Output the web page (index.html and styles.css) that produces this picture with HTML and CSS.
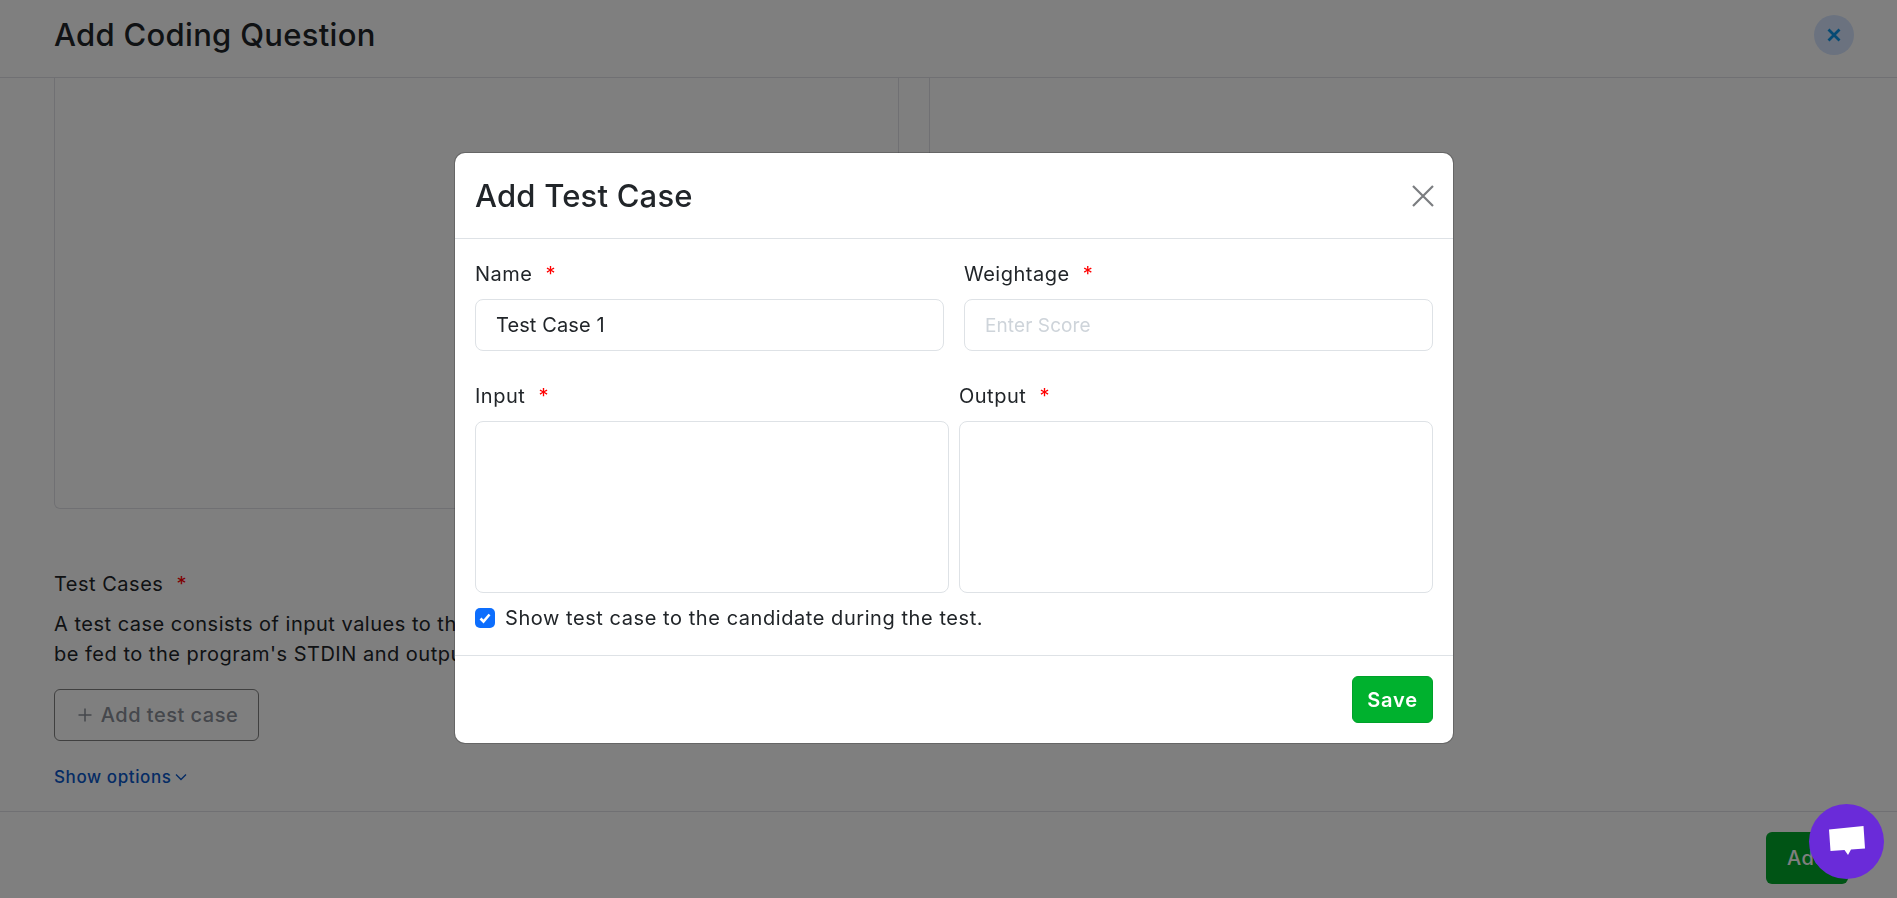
FILE: index.html
```html
<!DOCTYPE html>
<html lang="en">
<head>
<meta charset="utf-8">
<title>Add Coding Question</title>
<link rel="stylesheet" href="styles.css">
</head>
<body>
<div class="page">
  <header class="page-header">
    <h1 class="page-title">Add Coding Question</h1>
    <button class="round-close" type="button" aria-label="Close">
      <svg viewBox="0 0 16 16" width="16" height="16"><path d="M2.500 2.500l11 11M13.500 2.500l-11 11" fill="none" stroke="#0a94e8" stroke-width="2.800"/></svg>
    </button>
  </header>
  <main class="page-body">
    <div class="panes">
      <div class="pane-left"></div>
      <div class="pane-right"></div>
    </div>
    <div class="section">
      <div class="section-label">Test Cases <span class="req">*</span></div>
      <p class="section-text">A test case consists of input values to the<br>be fed to the program's STDIN and output</p>
      <button class="add-case" type="button">
        <svg viewBox="0 0 16 16" width="16" height="16"><path d="M8 1.500v13M1.500 8h13" fill="none" stroke="#8a8f98" stroke-width="1.500"/></svg>
        Add test case
      </button>
      <a class="show-options" href="#">Show options
        <svg viewBox="0 0 12 8" width="12" height="8"><path d="M1 1.500l5 5 5-5" fill="none" stroke="#0a58ca" stroke-width="1.400"/></svg>
      </a>
    </div>
  </main>
  <footer class="page-footer">
    <button class="add-btn" type="button">Add</button>
  </footer>
</div>

<div class="overlay">
  <div class="modal">
    <div class="modal-head">
      <h2 class="modal-title">Add Test Case</h2>
      <button class="modal-close" type="button" aria-label="Close">
        <svg viewBox="0 0 22 22" width="22" height="22"><path d="M1 1l20 20M21 1L1 21" fill="none" stroke="#7b7d80" stroke-width="2.200"/></svg>
      </button>
    </div>
    <div class="modal-body">
      <div class="row-top">
        <div class="field">
          <label class="field-label">Name <span class="req">*</span></label>
          <input class="text-input" type="text" value="Test Case 1">
        </div>
        <div class="field">
          <label class="field-label">Weightage <span class="req">*</span></label>
          <input class="text-input" type="text" placeholder="Enter Score">
        </div>
      </div>
      <div class="row-areas">
        <div class="field">
          <label class="field-label">Input <span class="req">*</span></label>
          <textarea class="area"></textarea>
        </div>
        <div class="field">
          <label class="field-label">Output <span class="req">*</span></label>
          <textarea class="area"></textarea>
        </div>
      </div>
      <label class="check-row">
        <span class="check">
          <svg viewBox="0 0 20 20" width="20" height="20"><path d="M5.500 10.500l3 3 6-7" fill="none" stroke="#fff" stroke-width="2.600"/></svg>
        </span>
        Show test case to the candidate during the test.
      </label>
    </div>
    <div class="modal-foot">
      <button class="save-btn" type="button">Save</button>
    </div>
  </div>
</div>

<button class="chat" type="button" aria-label="Chat">
  <svg viewBox="0 0 36 32" width="36" height="32"><path d="M0 3.500L34.500 0L36 22.500L22 23.500L19 29L15.500 24L1.500 25Z" fill="#fff"/></svg>
</button>
</body>
</html>
```
FILE: styles.css
```css
* { box-sizing: border-box; }
html, body { margin: 0; height: 100%; overflow: hidden; }
body {
  font-family: Inter, "Liberation Sans", sans-serif;
  color: #212529;
  background: #fff;
  font-size: 20px;
  letter-spacing: 0.5px;
}
button { font-family: inherit; letter-spacing: inherit; }

.page { height: 898px; display: flex; flex-direction: column; }

.page-header {
  height: 78px;
  flex: none;
  display: flex;
  align-items: center;
  justify-content: space-between;
  padding: 0 43px 8px 54px;
  border-bottom: 1px solid #e1e1e6;
}
.page-title { margin: 0; font-size: 31px; font-weight: 500; letter-spacing: 0.3px; color: #212529; }
.round-close {
  width: 40px; height: 40px; padding: 0; border: 0; border-radius: 50%;
  background: #d6e5ff; display: flex; align-items: center; justify-content: center;
}

.page-body { flex: 1; padding: 0 0 0 54px; overflow: hidden; }
.panes { height: 431px; display: flex; }
.pane-left {
  width: 845px;
  border: 1px solid #e1e1e6;
  border-top: 0;
  border-bottom-left-radius: 6px;
  border-bottom-right-radius: 6px;
}
.pane-right { margin-left: 30px; border-left: 1px solid #e1e1e6; width: 1px; }

.section { padding-top: 60px; }
.section-label { line-height: 30px; }
.req { color: #ff0000; margin-left: 7px; }
.section-text { margin: 10px 0 0; line-height: 30px; }
.add-case {
  margin-top: 20px;
  width: 205px; height: 52px;
  display: flex; align-items: center; justify-content: center; gap: 8px;
  padding: 0 0 0 2px;
  font-size: 20px; font-weight: 500; letter-spacing: 0.5px; color: #8a8f98;
  background: #fff; border: 1px solid #808080; border-radius: 6px;
}
.show-options {
  display: flex; align-items: center; gap: 3px;
  margin-top: 26px;
  font-size: 17px; font-weight: 500; letter-spacing: 0.6px; color: #0a58ca; text-decoration: none;
}

.page-footer {
  height: 87px; flex: none;
  border-top: 1px solid #e1e1e6;
  padding: 20px 49px 0 0;
  display: flex; justify-content: flex-end; align-items: flex-start;
}
.add-btn {
  width: 82px; height: 52px; border: 0; border-radius: 6px;
  background: #00a82a; color: #fff; font-size: 20px; font-weight: 500;
}

.overlay {
  position: fixed; inset: 0;
  background: rgba(0, 0, 0, 0.5);
  padding: 153px 0 0 455px;
}
.modal {
  width: 998px; height: 590px;
  background: #fff; border-radius: 10px;
  box-shadow: 0 0 0 1px rgba(0, 0, 0, 0.2);
  display: flex; flex-direction: column;
}
.modal-head {
  height: 86px; flex: none;
  display: flex; align-items: center; justify-content: space-between;
  padding: 0 19px 0 20px;
  border-bottom: 1px solid #dee2e6;
}
.modal-title { margin: 0; font-size: 31px; font-weight: 500; letter-spacing: 0.2px; color: #212529; }
.modal-close { padding: 0; border: 0; background: none; display: flex; }

.modal-body { flex: 1; padding: 20px 20px 0; }
.row-top { display: grid; grid-template-columns: 469px 469px; gap: 20px; }
.row-areas { display: grid; grid-template-columns: 474px 474px; gap: 10px; margin-top: 30px; }
.field { display: flex; flex-direction: column; }
.field-label { line-height: 30px; margin-bottom: 10px; }
.text-input {
  height: 52px; padding: 0 20px;
  border: 1px solid #dee2e6; border-radius: 8px;
  font: 20px Inter, "Liberation Sans", sans-serif; letter-spacing: 0.1px; color: #212529;
  outline: none;
}
.text-input::placeholder { color: #ced4da; font-size: 19px; }
.area {
  height: 172px; resize: none; display: block;
  border: 1px solid #dee2e6; border-radius: 8px; outline: none;
}
.check-row { display: flex; align-items: center; gap: 10px; margin-top: 15px; letter-spacing: 0.56px; line-height: 20px; }
.check {
  width: 20px; height: 20px; border-radius: 5px; background: #0d6efd;
  display: flex; flex: none;
}

.modal-foot {
  height: 88px; flex: none;
  border-top: 1px solid #dee2e6;
  padding: 20px 20px 0 0;
  display: flex; justify-content: flex-end; align-items: flex-start;
}
.save-btn {
  width: 81px; height: 47px; border: 1px solid #00a12a; border-radius: 6px;
  background: #00b12e; color: #fff; font-size: 20px; font-weight: 600; letter-spacing: 0.8px;
}

.chat {
  position: fixed; left: 1809px; top: 804px;
  width: 75px; height: 75px; padding: 0; border: 0; border-radius: 50%;
  background: #6a2bd9;
  display: flex; align-items: center; justify-content: center;
}
```
